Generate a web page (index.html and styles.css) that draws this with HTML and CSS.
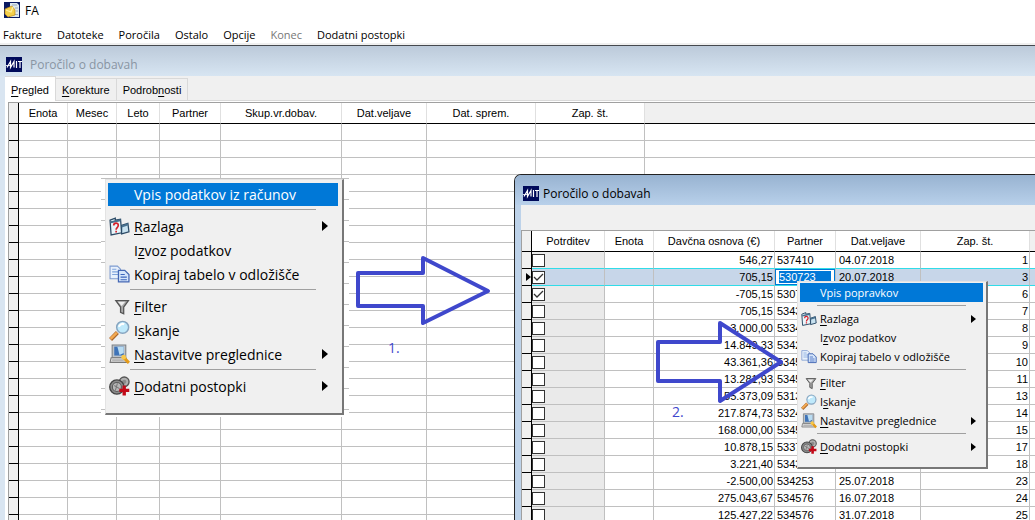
FILE: index.html
```html
<!DOCTYPE html>
<html lang="sl">
<head>
<meta charset="utf-8">
<title>FA</title>
<link rel="stylesheet" href="styles.css">
</head>
<body>
<svg class="defs" aria-hidden="true">
  <symbol id="i-mit" viewBox="0 0 16 15">
    <rect width="16" height="15" fill="#000a5a"/>
    <path d="M1 10.500 4.500 4.500v6L8 4.500v6M10.500 4v7M12 4.500h4M14 4.500v6.500" fill="none" stroke="#fff" stroke-width="1.200"/>
    <path d="M0 8.500h4" stroke="#fff" stroke-width=".8"/>
  </symbol>
  <symbol id="i-app" viewBox="0 0 16 16">
    <rect width="16" height="16" fill="#0a1a62"/>
    <path d="M6 1h7l2 2v12H6z" fill="#dfe9ee"/>
    <path d="M8 3h5M11 6h3M12 9h2M11 12.500h3" stroke="#9ab" stroke-width="1"/>
    <path d="M1 7l7-3 3 4v5l-7 2-3-3z" fill="#f4d04c" stroke="#c28a14" stroke-width=".7"/>
    <path d="M2 8l5 2 2-5" fill="none" stroke="#fff0a0" stroke-width="1.300"/>
  </symbol>
  <symbol id="i-help" viewBox="0 0 20 20">
    <path d="M1 4l5-2v2l5-1 1 13-10 2z" fill="#e9f6fb" stroke="#2b4a66" stroke-width="1.200"/>
    <path d="M1.500 5l9.500-2 .2 2-9.500 2z" fill="#48718f"/>
    <path d="M12 9l6-2 1 8-7 2z" fill="#c8e2f0" stroke="#2b4a66" stroke-width="1.200"/>
    <path d="M12 9l6-2v2l-6 2z" fill="#48718f"/>
    <path d="M4.500 9c0-3 4.500-3 4.300 0 0 2-2 2-2 4M6.800 14v1.600" fill="none" stroke="#d6222c" stroke-width="1.600"/>
  </symbol>
  <symbol id="i-copy" viewBox="0 0 20 20">
    <path d="M1 2h7l3 3v9H1z" fill="#e8f1fc" stroke="#7d9bd0"/>
    <path d="M3 5h4M3 7.500h6M3 10h6" stroke="#7fa4dc"/>
    <path d="M9 6h6l4 4v7H9z" fill="#d5e5fa" stroke="#4467b4" stroke-width="1.200"/>
    <path d="M11 10h4M11 12.500h6M11 15h6" stroke="#3c66bd"/>
  </symbol>
  <symbol id="i-filter" viewBox="0 0 20 20">
    <path d="M6.500 4.500h12L14 10.500V17l-3-1.500v-5z" fill="#aaa" stroke="#555" stroke-width="1.200"/>
    <path d="M8.500 5.500h7l-3.500 4z" fill="#eee"/>
  </symbol>
  <symbol id="i-search" viewBox="0 0 20 20">
    <path d="M1.500 18.500 8 12" stroke="#a9652a" stroke-width="4"/>
    <path d="M1.500 18 7.500 12" stroke="#f3a951" stroke-width="2.500"/>
    <circle cx="13" cy="7" r="5.700" fill="#bfe9fb" stroke="#87a5c0" stroke-width="1.400"/>
    <path d="M9.500 6.500c.5-2 3-3.500 5-2.500" fill="none" stroke="#fff" stroke-width="2"/>
  </symbol>
  <symbol id="i-settings" viewBox="0 0 20 20">
    <path d="M3 1h13v12H3z" fill="#bdc3c9" stroke="#7a8086"/>
    <path d="M5 2.500h9v8.500H5z" fill="#3f74b8"/>
    <path d="M8 2.500h6v6l-4 2z" fill="#b9dcf2"/>
    <path d="M2 13h14l2 4.500H1z" fill="#dcdcdc" stroke="#777"/>
    <path d="M3 15.300h11" stroke="#999"/>
    <path d="M13 12l2 2 4 4" fill="none" stroke="#e59b19" stroke-width="3"/>
    <circle cx="14" cy="12.500" r="2.200" fill="#f8c84a"/>
  </symbol>
  <symbol id="i-gears" viewBox="0 0 20 20">
    <circle cx="14.500" cy="5.500" r="4.600" fill="#b0b0b0" stroke="#555" stroke-width="1.300"/>
    <circle cx="14.500" cy="5.500" r="2" fill="#8a8a8a"/>
    <circle cx="7.500" cy="10.500" r="6.800" fill="#8a8a8a" stroke="#444" stroke-width="1.300"/>
    <circle cx="7.500" cy="10.500" r="4.300" fill="#b8b8b8" stroke="#5a5a5a"/>
    <path d="M5 9l5 3M8 7l-2 7" stroke="#777"/>
    <path d="M14.500 9v9.500M9.800 13.700h9.500" stroke="#c20a18" stroke-width="3.200"/>
  </symbol>
</svg>

<div class="app">
  <header class="titlebar"><svg class="app-icon"><use href="#i-app"/></svg><span>FA</span></header>
  <nav class="menubar">
    <button>Fakture</button><button>Datoteke</button><button>Poročila</button><button>Ostalo</button><button>Opcije</button><button disabled>Konec</button><button>Dodatni postopki</button>
  </nav>

  <main class="desktop">
    <section class="window main-window">
      <h2 class="caption inactive"><svg class="mit"><use href="#i-mit"/></svg>Poročilo o dobavah</h2>
      <div class="window-body">
        <div class="tabs" role="tablist">
          <button class="tab active" role="tab" aria-selected="true"><u>P</u>regled</button>
          <button class="tab" role="tab"><u>K</u>orekture</button>
          <button class="tab" role="tab">Podrob<u>n</u>osti</button>
        </div>
        <div class="panel">
          <table class="grid">
            <colgroup><col class="w10"><col class="w49"><col class="w49"><col class="w43"><col class="w61"><col class="w121"><col class="w85"><col class="w109"><col class="w109"><col></colgroup>
            <thead><tr><th></th><th>Enota</th><th>Mesec</th><th>Leto</th><th>Partner</th><th>Skup.vr.dobav.</th><th>Dat.veljave</th><th>Dat. sprem.</th><th>Zap. št.</th><th class="rest"></th></tr></thead>
            <tbody>
              <tr><th></th><td></td><td></td><td></td><td></td><td></td><td></td><td></td><td></td><td></td></tr>
              <tr><th></th><td></td><td></td><td></td><td></td><td></td><td></td><td></td><td></td><td></td></tr>
              <tr><th></th><td></td><td></td><td></td><td></td><td></td><td></td><td></td><td></td><td></td></tr>
              <tr><th></th><td></td><td></td><td></td><td></td><td></td><td></td><td></td><td></td><td></td></tr>
              <tr><th></th><td></td><td></td><td></td><td></td><td></td><td></td><td></td><td></td><td></td></tr>
              <tr><th></th><td></td><td></td><td></td><td></td><td></td><td></td><td></td><td></td><td></td></tr>
              <tr><th></th><td></td><td></td><td></td><td></td><td></td><td></td><td></td><td></td><td></td></tr>
              <tr><th></th><td></td><td></td><td></td><td></td><td></td><td></td><td></td><td></td><td></td></tr>
              <tr><th></th><td></td><td></td><td></td><td></td><td></td><td></td><td></td><td></td><td></td></tr>
              <tr><th></th><td></td><td></td><td></td><td></td><td></td><td></td><td></td><td></td><td></td></tr>
              <tr><th></th><td></td><td></td><td></td><td></td><td></td><td></td><td></td><td></td><td></td></tr>
              <tr><th></th><td></td><td></td><td></td><td></td><td></td><td></td><td></td><td></td><td></td></tr>
              <tr><th></th><td></td><td></td><td></td><td></td><td></td><td></td><td></td><td></td><td></td></tr>
              <tr><th></th><td></td><td></td><td></td><td></td><td></td><td></td><td></td><td></td><td></td></tr>
              <tr><th></th><td></td><td></td><td></td><td></td><td></td><td></td><td></td><td></td><td></td></tr>
              <tr><th></th><td></td><td></td><td></td><td></td><td></td><td></td><td></td><td></td><td></td></tr>
              <tr><th></th><td></td><td></td><td></td><td></td><td></td><td></td><td></td><td></td><td></td></tr>
              <tr><th></th><td></td><td></td><td></td><td></td><td></td><td></td><td></td><td></td><td></td></tr>
              <tr><th></th><td></td><td></td><td></td><td></td><td></td><td></td><td></td><td></td><td></td></tr>
              <tr><th></th><td></td><td></td><td></td><td></td><td></td><td></td><td></td><td></td><td></td></tr>
              <tr><th></th><td></td><td></td><td></td><td></td><td></td><td></td><td></td><td></td><td></td></tr>
              <tr><th></th><td></td><td></td><td></td><td></td><td></td><td></td><td></td><td></td><td></td></tr>
              <tr><th></th><td></td><td></td><td></td><td></td><td></td><td></td><td></td><td></td><td></td></tr>
              <tr><th></th><td></td><td></td><td></td><td></td><td></td><td></td><td></td><td></td><td></td></tr>
            </tbody>
          </table>
        </div>
      </div>
    </section>
  </main>

  <section class="window child-window">
    <h2 class="caption"><svg class="mit"><use href="#i-mit"/></svg>Poročilo o dobavah</h2>
    <div class="child-body">
      <table class="grid entries">
        <colgroup><col class="w10"><col class="w73"><col class="w49"><col class="w121"><col class="w61"><col class="w85"><col class="w109"><col></colgroup>
        <thead><tr><th></th><th>Potrditev</th><th>Enota</th><th>Davčna osnova (€)</th><th>Partner</th><th>Dat.veljave</th><th>Zap. št.</th><th></th></tr></thead>
        <tbody>
          <tr class="before"><th></th><td><input type="checkbox" aria-label="Potrditev 1"></td><td></td><td>546,27</td><td>537410</td><td>04.07.2018</td><td>1</td><td></td></tr>
          <tr class="current"><th><svg class="pointer" viewBox="0 0 5 8"><path d="M0 0l5 4-5 4z"/></svg></th><td><input type="checkbox" aria-label="Potrditev 3" checked></td><td></td><td>705,15</td><td><input class="edit" type="text" aria-label="Partner" value="530723"></td><td>20.07.2018</td><td>3</td><td></td></tr>
          <tr><th></th><td><input type="checkbox" aria-label="Potrditev 6" checked></td><td></td><td>-705,15</td><td>530723</td><td></td><td>6</td><td></td></tr>
          <tr><th></th><td><input type="checkbox" aria-label="Potrditev 7"></td><td></td><td>705,15</td><td>5343</td><td></td><td>7</td><td></td></tr>
          <tr><th></th><td><input type="checkbox" aria-label="Potrditev 8"></td><td></td><td>3.000,00</td><td>5334</td><td></td><td>8</td><td></td></tr>
          <tr><th></th><td><input type="checkbox" aria-label="Potrditev 9"></td><td></td><td>14.849,33</td><td>5342</td><td></td><td>9</td><td></td></tr>
          <tr><th></th><td><input type="checkbox" aria-label="Potrditev 10"></td><td></td><td>43.361,36</td><td>5345</td><td></td><td>10</td><td></td></tr>
          <tr><th></th><td><input type="checkbox" aria-label="Potrditev 11"></td><td></td><td>13.281,93</td><td>5345</td><td></td><td>11</td><td></td></tr>
          <tr><th></th><td><input type="checkbox" aria-label="Potrditev 13"></td><td></td><td>55.373,09</td><td>5313</td><td></td><td>13</td><td></td></tr>
          <tr><th></th><td><input type="checkbox" aria-label="Potrditev 14"></td><td></td><td>217.874,73</td><td>5324</td><td></td><td>14</td><td></td></tr>
          <tr><th></th><td><input type="checkbox" aria-label="Potrditev 15"></td><td></td><td>168.000,00</td><td>5345</td><td></td><td>15</td><td></td></tr>
          <tr><th></th><td><input type="checkbox" aria-label="Potrditev 17"></td><td></td><td>10.878,15</td><td>5337</td><td></td><td>17</td><td></td></tr>
          <tr><th></th><td><input type="checkbox" aria-label="Potrditev 18"></td><td></td><td>3.221,40</td><td>5343</td><td></td><td>18</td><td></td></tr>
          <tr><th></th><td><input type="checkbox" aria-label="Potrditev 23"></td><td></td><td>-2.500,00</td><td>534253</td><td>25.07.2018</td><td>23</td><td></td></tr>
          <tr><th></th><td><input type="checkbox" aria-label="Potrditev 24"></td><td></td><td>275.043,67</td><td>534576</td><td>16.07.2018</td><td>24</td><td></td></tr>
          <tr><th></th><td><input type="checkbox" aria-label="Potrditev 25"></td><td></td><td>125.427,22</td><td>534576</td><td>31.07.2018</td><td>25</td><td></td></tr>
        </tbody>
      </table>
    </div>
  </section>

  <div class="menu-backdrop">
    <div class="menu large" role="menu">
      <button class="item selected" role="menuitem">Vpis podatkov iz računov</button>
      <hr>
      <button class="item" role="menuitem"><svg><use href="#i-help"/></svg><span><u>R</u>azlaga</span><i class="more"></i></button>
      <button class="item" role="menuitem"><span>I<u>z</u>voz podatkov</span></button>
      <button class="item" role="menuitem"><svg><use href="#i-copy"/></svg><span>Kopiraj tabelo v odložišče</span></button>
      <hr>
      <button class="item" role="menuitem"><svg><use href="#i-filter"/></svg><span><u>F</u>ilter</span></button>
      <button class="item" role="menuitem"><svg><use href="#i-search"/></svg><span>I<u>s</u>kanje</span></button>
      <button class="item" role="menuitem"><svg><use href="#i-settings"/></svg><span><u>N</u>astavitve preglednice</span><i class="more"></i></button>
      <hr>
      <button class="item" role="menuitem"><svg><use href="#i-gears"/></svg><span><u>D</u>odatni postopki</span><i class="more"></i></button>
    </div>
  </div>

  <svg class="arrow arrow-one" viewBox="0 0 136 72"><path d="M3 18H68V3L133 36 68 68V51H3z"/></svg>
  <span class="step step-one">1.</span>
  <svg class="arrow arrow-two" viewBox="0 0 130 84"><path d="M3 22H65V3L126 42 65 81V61H3z"/></svg>
  <span class="step step-two">2.</span>

  <div class="menu small" role="menu">
    <button class="item selected" role="menuitem">Vpis popravkov</button>
    <hr>
    <button class="item" role="menuitem"><svg><use href="#i-help"/></svg><span><u>R</u>azlaga</span><i class="more"></i></button>
    <button class="item" role="menuitem"><span>I<u>z</u>voz podatkov</span></button>
    <button class="item" role="menuitem"><svg><use href="#i-copy"/></svg><span>Kopiraj tabelo v odložišče</span></button>
    <hr>
    <button class="item" role="menuitem"><svg><use href="#i-filter"/></svg><span><u>F</u>ilter</span></button>
    <button class="item" role="menuitem"><svg><use href="#i-search"/></svg><span>I<u>s</u>kanje</span></button>
    <button class="item" role="menuitem"><svg><use href="#i-settings"/></svg><span><u>N</u>astavitve preglednice</span><i class="more"></i></button>
    <hr>
    <button class="item" role="menuitem"><svg><use href="#i-gears"/></svg><span><u>D</u>odatni postopki</span><i class="more"></i></button>
  </div>
</div>
</body>
</html>
```

FILE: styles.css
```css
* { box-sizing: border-box; }
body {
  margin: 0;
  background: #fff;
  color: #000;
  font-family: "Open Sans", "Noto Sans", sans-serif;
  font-size: 12px;
}
button { margin: 0; padding: 0; border: 0; background: none; color: inherit; font: inherit; }
u { text-underline-offset: 2px; }
.defs { position: absolute; width: 0; height: 0; }

.app { position: relative; display: flex; flex-direction: column; height: 100vh; overflow: hidden; }
.titlebar { display: flex; align-items: center; gap: 5px; height: 20px; padding-left: 4px; }
.app-icon { width: 16px; height: 16px; }
.menubar { display: flex; align-items: center; gap: 15px; height: 25px; padding: 6px 3px 0; border-bottom: 2px solid #f0f0f0; font-size: 11px; line-height: 16px; }
.menubar button:disabled { color: #777; }

.desktop { flex: 1; min-height: 0; overflow: hidden; border-top: 1px solid #45494e; }
.caption { display: flex; align-items: center; gap: 8px; height: 30px; margin: 0; font-size: 12px; font-weight: 400; }
.mit { width: 16px; height: 15px; }

.main-window { background: #d9e5f1; }
.main-window .caption { padding: 6px 6px 0; background: linear-gradient(#bccada, #d7e5f2); color: #8995a3; }
.window-body { margin-left: 5px; background: #f0f0f0; }
.tabs { display: flex; align-items: flex-end; height: 25px; border-bottom: 1px solid #d9d9d9; font: 11px/20px "Liberation Sans", sans-serif; }
.tab { height: 22px; padding: 1px 6px 0; border: 1px solid #d9d9d9; border-left: 0; border-bottom: 0; }
.tab.active { height: 25px; margin-bottom: -1px; padding: 1px 6px 0; background: #fff; }
.panel { padding: 1px 0 0 3px; background: #fff; }

.grid { width: 100%; table-layout: fixed; border-spacing: 0; border-top: 1px solid #a0a0a0; border-left: 1px solid #a0a0a0; background: #fff; font: 11px/16px "Liberation Sans", sans-serif; }
.w10 { width: 10px; } .w43 { width: 43px; } .w49 { width: 49px; } .w61 { width: 61px; }
.w73 { width: 73px; } .w85 { width: 85px; } .w109 { width: 109px; } .w121 { width: 121px; }
.grid th, .grid td { height: 17px; padding: 0; border-right: 1px solid #c0c0c0; border-bottom: 1px solid #c0c0c0; font-weight: 400; white-space: nowrap; overflow: hidden; }
.grid thead th { height: 21px; border-right-color: #e0e0e0; border-bottom-color: #000; }
.grid th:first-child, .grid thead th:first-child { border-color: #000; background: #f0f0f0; }
.grid .rest { background: #f0f0f0; }
.grid th:last-child, .grid td:last-child { border-right: 0; }

.child-window { position: absolute; top: 174px; left: 514px; right: 0; bottom: 0; overflow: hidden; border: 1px solid #222; border-right: 0; border-bottom: 0; border-top-left-radius: 7px; background: #bdd2e9; }
.child-window .caption { gap: 4px; padding: 6px 8px 0; background: linear-gradient(#98b3d1, #b8d0ea); }
.child-body { margin-left: 6px; padding-top: 25px; background: #f0f0f0; }
.entries td { padding: 0 2px; }
.entries td:nth-child(2) { padding: 1px 0; background: #eaeaea; line-height: 0; }
.entries td:nth-child(4), .entries td:nth-child(7) { padding-right: 1px; text-align: right; }
.entries td:nth-child(6) { padding-left: 3px; }
.entries thead th:last-child { background: #f0f0f0; }
.entries input[type="checkbox"] { appearance: none; display: block; width: 13px; height: 13px; margin: 0; border: 1px solid #333; background: #fff; }
.entries input[type="checkbox"]:checked { background: #fff url("data:image/svg+xml,%3Csvg xmlns='http://www.w3.org/2000/svg' viewBox='0 0 11 11'%3E%3Cpath d='M1 5l3 3 6-6' fill='none' stroke='%23333' stroke-width='1.300'/%3E%3C/svg%3E"); }
.entries .before td, .entries .current td { border-bottom-color: #30dce8; }
.entries .current td { background: #c7d6e9; }
.entries .current td:nth-child(5) { padding: 0; }
.pointer { display: block; width: 5px; height: 8px; margin-left: 4px; }
.edit { display: block; width: 100%; height: 16px; padding: 1px 3px; border: 1px solid #0078d7; background: linear-gradient(#0078d7, #0078d7) content-box, #fff; color: #fff; font: inherit; line-height: 12px; outline: 0; }

.menu-backdrop { position: absolute; top: 178px; left: 101px; padding: 1px 5px 2px 4px; background: repeating-linear-gradient(#c0c0c0 0 1px, #fff 1px 21px); }
.menu { display: flex; flex-direction: column; background: #f0f0f0; border: 1px solid #e3e3e3; border-right: 2px solid #777; border-bottom: 2px solid #777; }
.item { position: relative; display: flex; align-items: center; text-align: left; white-space: nowrap; }
.item.selected { background: #0078d7; color: #fff; }
.item svg { position: absolute; }
.menu hr { border: 0; background: #a0a0a0; }
.more { position: absolute; border: solid transparent; border-left-color: #000; border-right: 0; }

.large { width: 239px; padding: 3px 4px 15px 2px; font-size: 14px; }
.large .item { height: 24px; padding-left: 26px; }
.large .item.selected { height: 23px; }
.large svg { left: 1px; width: 21px; height: 21px; }
.large hr { width: 186px; height: 1px; margin: 3px 0 4px 22px; }
.large .more { right: 10px; border-width: 5px 0 5px 6px; }

.small { position: absolute; top: 281px; left: 797px; width: 191px; padding: 1px 3px 11px 2px; font-size: 11px; }
.small .item { height: 19px; padding-left: 20px; }
.small svg { left: 1px; width: 16px; height: 16px; }
.small hr { width: 149px; height: 1px; margin: 3px 0 3px 17px; }
.small .more { right: 7px; border-width: 4px 0 4px 5px; }

.arrow { position: absolute; fill: none; stroke: #3f48cc; stroke-width: 4; stroke-linejoin: round; }
.arrow-one { top: 255px; left: 355px; width: 136px; height: 72px; }
.arrow-two { top: 320px; left: 655px; width: 130px; height: 84px; }
.step { position: absolute; color: #3f48cc; font-size: 14px; line-height: 16px; }
.step-one { top: 340px; left: 388px; }
.step-two { top: 404px; left: 672px; }
```
